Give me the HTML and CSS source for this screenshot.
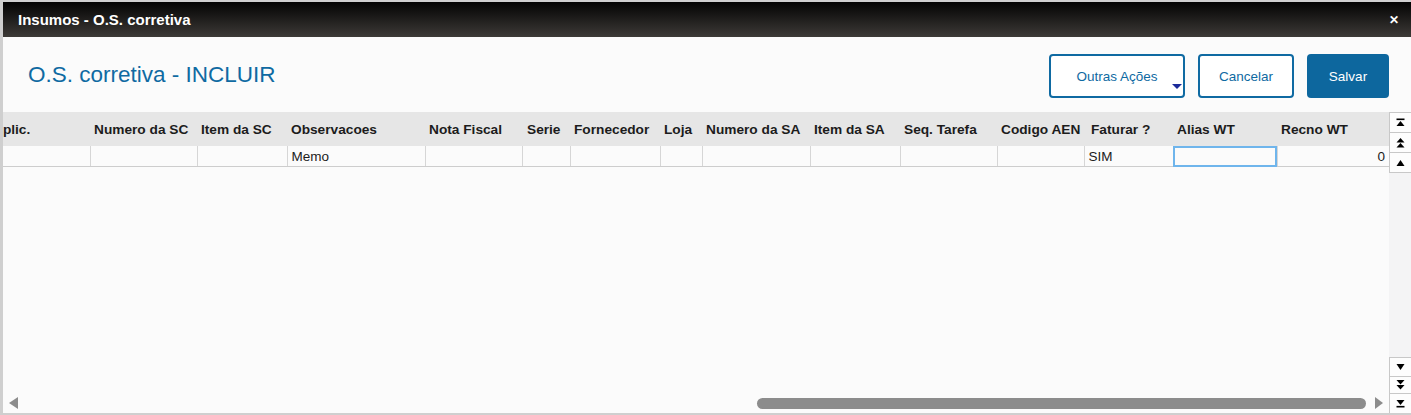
FILE: index.html
```html
<!DOCTYPE html>
<html>
<head>
    <title>Insumos - O.S. corretiva</title>
    <link rel="stylesheet" href="styles.css">
</head>
<body>
    <div class="modal">
        <div class="modal-header">
            <span class="modal-title">Insumos - O.S. corretiva</span>
            <span class="close">&#x2715;</span>
        </div>
        <div class="modal-body">
            <div class="toolbar">
                <h1 class="page-title">O.S. corretiva - INCLUIR</h1>
                <div class="actions">
                    <button type="button" class="btn btn-outline btn-menu">Outras Ações<span class="caret"></span></button>
                    <button type="button" class="btn btn-outline btn-cancel">Cancelar</button>
                    <button type="button" class="btn btn-primary">Salvar</button>
                </div>
            </div>
            <div class="grid">
                <div class="grid-main">
                    <div class="grid-view">
                        <table class="browse">
                            <colgroup>
                                <col style="width:101px">
                                <col style="width:107px">
                                <col style="width:90px">
                                <col style="width:138px">
                                <col style="width:97px">
                                <col style="width:48px">
                                <col style="width:90px">
                                <col style="width:42px">
                                <col style="width:108px">
                                <col style="width:90px">
                                <col style="width:97px">
                                <col style="width:87px">
                                <col style="width:89px">
                                <col style="width:104px">
                                <col style="width:112px">
                            </colgroup>
                            <thead>
                                <tr>
                                    <th>Aplic.</th>
                                    <th>Numero da SC</th>
                                    <th>Item da SC</th>
                                    <th>Observacoes</th>
                                    <th>Nota Fiscal</th>
                                    <th class="th-serie">Serie</th>
                                    <th>Fornecedor</th>
                                    <th>Loja</th>
                                    <th>Numero da SA</th>
                                    <th>Item da SA</th>
                                    <th>Seq. Tarefa</th>
                                    <th>Codigo AEN</th>
                                    <th class="th-faturar">Faturar ?</th>
                                    <th>Alias WT</th>
                                    <th>Recno WT</th>
                                </tr>
                            </thead>
                            <tbody>
                                <tr>
                                    <td></td>
                                    <td></td>
                                    <td></td>
                                    <td>Memo</td>
                                    <td></td>
                                    <td></td>
                                    <td></td>
                                    <td></td>
                                    <td></td>
                                    <td></td>
                                    <td></td>
                                    <td></td>
                                    <td>SIM</td>
                                    <td class="editing"></td>
                                    <td class="num">0</td>
                                </tr>
                            </tbody>
                        </table>
                    </div>
                    <div class="hscroll">
                        <svg class="arrow" width="9" height="12" viewBox="0 0 9 12"><polygon points="9,0 9,12 0,6" fill="#8c8c8c"/></svg>
                        <div class="track"><div class="thumb"></div></div>
                        <svg class="arrow" width="8" height="12" viewBox="0 0 8 12"><polygon points="0,0 8,6 0,12" fill="#8c8c8c"/></svg>
                    </div>
                </div>
                <div class="vscroll">
                    <div class="vbtn">
                        <svg width="9" height="9" viewBox="0 0 9 9"><rect x="0.5" y="0.5" width="8" height="1.6"/><polygon points="4.5,3 8.5,8 0.5,8"/></svg>
                    </div>
                    <div class="vbtn">
                        <svg width="9" height="10" viewBox="0 0 9 10"><polygon points="4.5,0 8.5,4.5 0.5,4.5"/><polygon points="4.5,5 8.5,9.5 0.5,9.5"/></svg>
                    </div>
                    <div class="vbtn">
                        <svg width="9" height="6" viewBox="0 0 9 6"><polygon points="4.5,0 8.5,6 0.5,6"/></svg>
                    </div>
                    <div class="vspace"></div>
                    <div class="vbtn vbtn-a">
                        <svg width="9" height="6" viewBox="0 0 9 6"><polygon points="0.5,0 8.5,0 4.5,6"/></svg>
                    </div>
                    <div class="vbtn vbtn-b">
                        <svg width="9" height="10" viewBox="0 0 9 10"><polygon points="0.5,0 8.5,0 4.5,4.5"/><polygon points="0.5,5 8.5,5 4.5,9.5"/></svg>
                    </div>
                    <div class="vbtn">
                        <svg width="9" height="9" viewBox="0 0 9 9"><polygon points="0.5,1 8.5,1 4.5,6"/><rect x="0.5" y="6.9" width="8" height="1.6"/></svg>
                    </div>
                </div>
            </div>
        </div>
    </div>
</body>
</html>
```

FILE: styles.css
```css
html, body {
    height: 100%;
}
body {
    margin: 0;
    background: #cfcfcf;
    font-family: "Liberation Sans", Arial, sans-serif;
    overflow: hidden;
}
.modal {
    margin: 2px 0 0 3px;
    width: calc(100% - 3px);
    height: 411px;
    display: flex;
    flex-direction: column;
    background-color: #fbfbfb;
}
.modal-header {
    height: 35px;
    flex: none;
    display: flex;
    align-items: center;
    justify-content: space-between;
    padding: 0 12px 0 15px;
    background: linear-gradient(#030303, #3d3a37);
    color: #fff;
}
.modal-title {
    font-size: 15px;
    font-weight: bold;
}
.close {
    font-size: 12px;
    font-weight: bold;
}
.modal-body {
    flex: 1;
    display: flex;
    flex-direction: column;
    min-height: 0;
}
.toolbar {
    height: 75px;
    box-sizing: border-box;
    flex: none;
    display: flex;
    align-items: flex-start;
    justify-content: space-between;
    padding: 17px 22px 14px 25px;
}
.page-title {
    margin: 8px 0 0;
    font-size: 22.5px;
    font-weight: normal;
    color: #0f6aa2;
    line-height: 26px;
}
.actions {
    display: flex;
    gap: 13px;
}
.btn {
    height: 44px;
    border-radius: 4px;
    font-family: "Liberation Sans", Arial, sans-serif;
    font-size: 13.5px;
    cursor: pointer;
    padding: 0;
    box-sizing: border-box;
}
.btn-outline {
    background-color: #fff;
    border: 2px solid #0f6aa2;
    color: #0f6aa2;
}
.btn-menu {
    width: 136px;
    position: relative;
}
.btn-cancel {
    width: 96px;
}
.btn-primary {
    width: 82px;
    background-color: #0d679e;
    border: 0;
    color: #fff;
}
.caret {
    position: absolute;
    right: 1px;
    bottom: 7px;
    width: 0;
    height: 0;
    border-left: 5px solid transparent;
    border-right: 5px solid transparent;
    border-top: 5px solid #1b2a9a;
}
.grid {
    flex: 1;
    display: flex;
    min-height: 0;
}
.grid-main {
    flex: 1;
    display: flex;
    flex-direction: column;
    min-width: 0;
}
.grid-view {
    flex: 1;
    overflow: hidden;
}
.browse {
    margin-left: -14px;
    table-layout: fixed;
    border-collapse: collapse;
    width: 1400px;
    font-size: 13.5px;
    color: #1c1c1c;
}
.browse th {
    height: 34px;
    padding: 0 4px;
    text-align: left;
    font-size: 13.7px;
    font-weight: bold;
    background-color: #e6e6e6;
    white-space: nowrap;
    overflow: hidden;
}
.browse th.th-serie {
    padding-left: 5px;
}
.browse th.th-faturar {
    padding-left: 7px;
}
.browse td {
    height: 20px;
    padding: 0 4px;
    border-right: 1px solid #d6d6d6;
    border-bottom: 1px solid #cdcdcd;
    white-space: nowrap;
}
.browse td.editing {
    outline: 2px solid #6fb5ec;
    outline-offset: -2px;
}
.browse td.num {
    text-align: right;
    border-right: 0;
}
.hscroll {
    height: 20px;
    flex: none;
    display: flex;
    align-items: center;
    padding: 0 6px;
}
.track {
    flex: 1;
    height: 11px;
}
.thumb {
    margin-left: 739px;
    width: 609px;
    height: 11px;
    border-radius: 6px;
    background-color: #8c8c8c;
}
.vscroll {
    width: 22px;
    flex: none;
    display: flex;
    flex-direction: column;
    background-color: #f4f4f5;
}
.vbtn {
    height: 20px;
    box-sizing: border-box;
    border-left: 1px solid #c8c8c8;
    border-top: 1px solid #c8c8c8;
    background-color: #fdfdfd;
    display: flex;
    align-items: center;
    justify-content: center;
}
.vbtn svg {
    fill: #000;
}
.vbtn-a {
    height: 19px;
}
.vbtn-b {
    height: 17px;
}
.vspace {
    flex: 1;
    border-top: 1px solid #c8c8c8;
}
```
